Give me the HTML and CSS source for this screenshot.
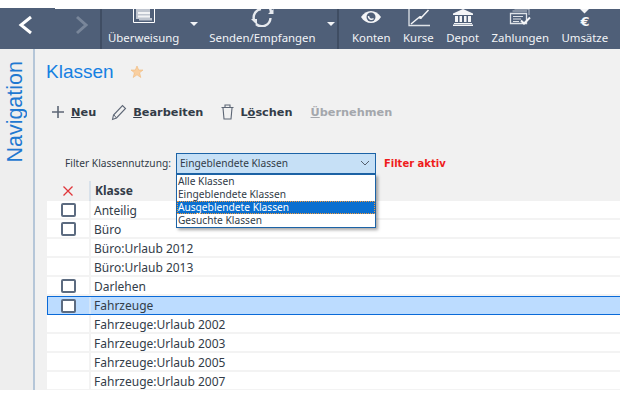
FILE: index.html
```html
<!DOCTYPE html>
<html lang="de">
<head>
<meta charset="utf-8">
<title>Klassen</title>
<link rel="stylesheet" href="styles.css">
</head>
<body>
<div class="topstrip"><div class="topstrip-left"></div></div>
<header class="toolbar">
  <nav class="history">
    <svg class="chev" width="16" height="20" viewBox="0 0 16 20"><path d="M14 2 L4 10 L14 18" fill="none" stroke="#fff" stroke-width="3"/></svg>
    <svg class="chev" width="16" height="20" viewBox="0 0 16 20"><path d="M3 2 L12 10 L3 18" fill="none" stroke="#79869a" stroke-width="3"/></svg>
  </nav>
  <div class="group split-group">
    <div class="tool">
      <svg class="icon" width="24" height="18" viewBox="0 0 24 18"><path d="M1.500 0V13.500H22.500V0" fill="none" stroke="#fff"/><path d="M4 0H18V9H20V11.500H7V10H4Z" fill="#bfc5cf"/><path d="M6 3H18V5H6ZM6 6.500H18V8.500H6Z" fill="#f2f3f5"/></svg>
      <span class="label">Überweisung</span>
    </div>
    <span class="caret"></span>
    <div class="tool">
      <svg class="icon" width="24" height="18" viewBox="0 0 24 18"><path d="M4 11 A8.700 8.700 0 0 1 11 0M19 -2A8.700 8.700 0 0 1 21 4" fill="none" stroke="#e6e9ee" stroke-width="2.400"/><path d="M20.500 9A8.700 8.700 0 0 1 6 15" fill="none" stroke="#e6e9ee" stroke-width="2.400"/><path d="M18 5H23.500V0Z" fill="#e6e9ee"/><path d="M1 10H7V16Z" fill="#e6e9ee"/></svg>
      <span class="label">Senden/Empfangen</span>
    </div>
    <span class="caret"></span>
  </div>
  <div class="group tools">
    <div class="tool">
      <svg class="icon" width="24" height="18" viewBox="0 0 24 18"><path d="M2 8C7 0 17 0 22 8C17 16 7 16 2 8Z" fill="#f4f5f7"/><circle cx="12" cy="8" r="4.500" fill="#4f5f78"/><path d="M9.500 7A3 3 0 0 0 14.500 9.500" stroke="#f4f5f7" stroke-width="1.500" fill="none"/></svg>
      <span class="label">Konten</span>
    </div>
    <div class="tool">
      <svg class="icon" width="24" height="18" viewBox="0 0 24 18"><path d="M3 0V16.500H24" fill="none" stroke="#dfe3e8" stroke-width="1.300"/><path d="M5 15L13.500 8L15.500 8.500L22.500 1" fill="none" stroke="#f4f5f7" stroke-width="1.500"/><circle cx="14.500" cy="8.500" r="1.500" fill="#f4f5f7"/></svg>
      <span class="label">Kurse</span>
    </div>
    <div class="tool">
      <svg class="icon" width="24" height="18" viewBox="0 0 24 18"><path d="M12 0L22 4.500V6H2V4.500Z" fill="#f4f5f7"/><path d="M4 7H7V13H4ZM8.500 7H11V13H8.500ZM13 7H15.500V13H13ZM17 7H20V13H17Z" fill="#f4f5f7"/><path d="M3 14H21V15H3ZM2 15.500H22V17H2Z" fill="#f4f5f7"/></svg>
      <span class="label">Depot</span>
    </div>
    <div class="tool">
      <svg class="icon" width="24" height="18" viewBox="0 0 24 18"><path d="M6.500 0H21V6M4.500 2H19" fill="none" stroke="#bcc3cd"/><path d="M2.500 4.500H18.500V14.500H2.500Z" fill="none" stroke="#dfe3e8" stroke-width="1.300"/><path d="M5 7.500H15M5 10H13M5 12.500H11" stroke="#dfe3e8"/><path d="M13 11.500L16 14.500L22 8.500" fill="none" stroke="#f6f7f9" stroke-width="2"/></svg>
      <span class="label">Zahlungen</span>
    </div>
    <div class="tool">
      <svg class="icon" width="24" height="18" viewBox="0 0 24 18"><path d="M7 0H16L11.500 4.500Z" fill="#f4f5f7"/><text x="12" y="16.500" text-anchor="middle" class="euro">€</text></svg>
      <span class="label">Umsätze</span>
    </div>
    <div class="tool">
      <span class="icon-space"></span>
      <span class="label">Suche</span>
    </div>
  </div>
</header>
<div class="main">
  <aside class="sidenav"><span class="sidenav-text">Navigation</span></aside>
  <section class="content">
    <div class="title-row">
      <h1 class="title">Klassen</h1>
      <svg class="star" width="14" height="14" viewBox="0 0 14 14"><path d="M7 1L8.700 5H13L9.600 7.800L10.800 12.500L7 9.800L3.200 12.500L4.400 7.800L1 5H5.300Z" fill="#f9cfa0" stroke="#f0b87a" stroke-width=".6"/></svg>
    </div>
    <div class="actions">
      <button class="action">
        <svg width="14" height="14" viewBox="0 0 14 14"><path d="M7 1V13M1 7H13" stroke="#5d6675" stroke-width="1.600"/></svg>
        <span><u>N</u>eu</span>
      </button>
      <button class="action">
        <svg width="16" height="18" viewBox="0 0 16 18"><path d="M1.500 16.500L2.500 12L11.500 2.500L14.500 5.500L5.500 15Z" fill="none" stroke="#5d6675" stroke-width="1.100"/><path d="M3 12L5.500 15" stroke="#5d6675"/></svg>
        <span><u>B</u>earbeiten</span>
      </button>
      <button class="action">
        <svg width="16" height="16" viewBox="-3 0 16 16"><path d="M.500 3.500H12.500M4 3V1H9V3M2 4L3 15H10L11 4" fill="none" stroke="#5d6675" stroke-width="1.100"/></svg>
        <span>L<u>ö</u>schen</span>
      </button>
      <button class="action disabled"><span><u>Ü</u>bernehmen</span></button>
    </div>
    <div class="filter-row">
      <label class="filter-label">Filter Klassennutzung:</label>
      <div class="combo">
        <div class="combo-field">
          <span>Eingeblendete Klassen</span>
          <svg width="10" height="6" viewBox="0 0 10 6"><path d="M1 1L5 5L9 1" fill="none" stroke="#55606e" stroke-width="1"/></svg>
        </div>
        <ul class="combo-list">
          <li>Alle Klassen</li>
          <li>Eingeblendete Klassen</li>
          <li class="active">Ausgeblendete Klassen</li>
          <li>Gesuchte Klassen</li>
        </ul>
      </div>
      <span class="filter-state">Filter aktiv</span>
    </div>
    <div class="table">
      <div class="thead">
        <div class="cell-check"><svg width="12" height="12" viewBox="0 0 12 12"><path d="M1.500 1.500L10.500 10.500M10.500 1.500L1.500 10.500" stroke="#e0353a" stroke-width="1.300"/></svg></div>
        <div class="th">Klasse</div>
      </div>
      <div class="row"><div class="cell-check"><span class="box"></span></div><div class="cell">Anteilig</div></div>
      <div class="row"><div class="cell-check"><span class="box"></span></div><div class="cell">Büro</div></div>
      <div class="row"><div class="cell-check"></div><div class="cell">Büro:Urlaub 2012</div></div>
      <div class="row"><div class="cell-check"></div><div class="cell">Büro:Urlaub 2013</div></div>
      <div class="row"><div class="cell-check"><span class="box"></span></div><div class="cell">Darlehen</div></div>
      <div class="row selected"><div class="cell-check"><span class="box"></span></div><div class="cell">Fahrzeuge</div></div>
      <div class="row"><div class="cell-check"></div><div class="cell">Fahrzeuge:Urlaub 2002</div></div>
      <div class="row"><div class="cell-check"></div><div class="cell">Fahrzeuge:Urlaub 2003</div></div>
      <div class="row"><div class="cell-check"></div><div class="cell">Fahrzeuge:Urlaub 2005</div></div>
      <div class="row"><div class="cell-check"></div><div class="cell">Fahrzeuge:Urlaub 2007</div></div>
    </div>
  </section>
</div>
</body>
</html>
```
FILE: styles.css
```css
* { box-sizing: border-box; }
html, body { margin: 0; height: 100%; overflow: hidden; }
body {
  width: 620px;
  height: 400px;
  background: #fff;
  font-family: "Noto Sans", sans-serif;
  font-size: 12px;
  color: #333c48;
  display: flex;
  flex-direction: column;
}
.topstrip { height: 9px; background: #fff; display: flex; align-items: flex-end; }
.topstrip-left { width: 55px; height: 1px; background: #4f5f78; }

.toolbar {
  height: 40px;
  background: #4f5f78;
  display: flex;
  overflow: hidden;
  color: #f2f4f7;
}
.history {
  flex: none;
  width: 102px;
  border-right: 2px solid #3f4d63;
  display: flex;
  align-items: flex-start;
  gap: 41px;
  padding: 6px 0 0 17px;
}
.group { display: flex; flex: none; }
.split-group {
  width: 237px;
  padding-left: 6px;
  gap: 11px;
  border-right: 2px solid #3f4d63;
}
.tools { padding-left: 13px; gap: 12.500px; }
.tool { display: flex; flex-direction: column; align-items: center; }
.icon { display: block; flex: none; }
.icon-space { display: block; height: 18px; }
.label { margin-top: 4px; line-height: 14px; white-space: nowrap; font-size: 11.400px; }
.caret {
  flex: none;
  margin-top: 13px;
  width: 0;
  height: 0;
  border-left: 4px solid transparent;
  border-right: 4px solid transparent;
  border-top: 4px solid #f2f4f7;
}
.euro { font: bold 13px "DejaVu Sans", sans-serif; fill: #f6f7f9; }

.main { flex: none; height: 341px; display: flex; overflow: hidden; background: #f1f1f1; }
.sidenav {
  width: 35px;
  flex: none;
  background: #eeeeee;
  border-right: 2px solid #b5c6d8;
  padding-top: 12px;
  display: flex;
  justify-content: center;
  align-items: flex-start;
}
.sidenav-text {
  writing-mode: vertical-rl;
  transform: rotate(180deg);
  font: 21.500px "Liberation Sans", sans-serif;
  color: #1f78d1;
  margin-right: 3px;
}
.content { flex: 1; min-width: 0; padding-left: 12px; }
.title-row { height: 48px; display: flex; align-items: center; padding-bottom: 2px; }
.title { margin: 0 0 0 -1px; font: 400 19px "Liberation Sans", sans-serif; color: #1580e2; }
.star { margin-left: 16px; }
.actions { height: 30px; display: flex; align-items: center; padding-left: 4px; }
.action {
  display: flex;
  align-items: center;
  gap: 6px;
  margin-right: 15px;
  padding: 0;
  border: 0;
  background: none;
  font: bold 11.300px "DejaVu Sans", sans-serif;
  color: #333c48;
}
.action.disabled { color: #a4a7ac; margin-left: 3px; }
.filter-row {
  height: 32px;
  margin-top: 20px;
  display: flex;
  align-items: center;
  padding-left: 18px;
  gap: 5px;
}
.filter-label { font-size: 10.200px; white-space: nowrap; }
.combo { position: relative; width: 200px; }
.combo-field {
  height: 21px;
  border: 1px solid #1c63a6;
  background: #c6e0f6;
  display: flex;
  align-items: center;
  justify-content: space-between;
  padding: 0 5px 0 3px;
  font-size: 10.200px;
}
.combo-list {
  position: absolute;
  left: 0;
  right: 0;
  top: 21px;
  margin: 0;
  padding: 0;
  list-style: none;
  background: #fff;
  border: 1px solid #1c63a6;
  box-shadow: 2px 2px 3px rgba(0, 0, 0, .35);
  font-size: 10.200px;
  z-index: 2;
}
.combo-list li { height: 13px; line-height: 13px; padding-left: 1px; }
.combo-list li.active { background: #0a6fd0; color: #fff; outline: 1px dotted #f59a3a; outline-offset: -1px; }
.filter-state { margin-left: 3px; font: bold 10px "DejaVu Sans", sans-serif; color: #ef1c1c; }

.thead { height: 20px; display: flex; align-items: stretch; margin-top: 2px; }
.cell-check { width: 42px; flex: none; display: flex; align-items: center; justify-content: center; }
.th { border-left: 2px solid #d8e1ea; padding-left: 4px; font-weight: bold; flex: 1; line-height: 19px; }
.row {
  height: 19px;
  display: flex;
  background: #fff;
  border-bottom: 2px solid #f3f3f3;
}
.row .cell-check { height: 17px; }
.cell { flex: 1; height: 17px; border-left: 2px solid #f3f3f3; padding-left: 3px; line-height: 20px; white-space: nowrap; }
.box {
  display: block;
  width: 15px;
  height: 14px;
  border: 2px solid #5c6b80;
  border-radius: 2px;
  background: #fff;
}
.row.selected {
  background: #bcdcff;
  border: 1px solid #0a6ad8;
  border-right: 0;
}
.row.selected .cell-check { width: 41px; }
.row.selected .cell { border-left-color: #d3e5f8; line-height: 18px; }
```
